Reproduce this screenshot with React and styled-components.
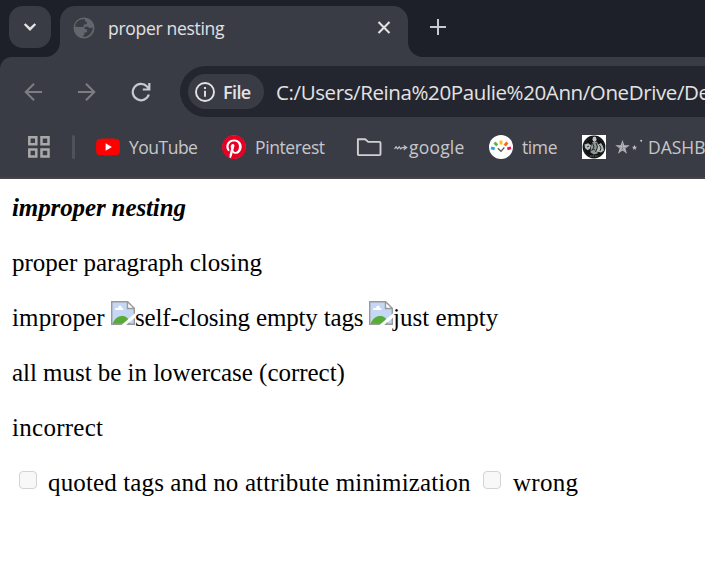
import React from "react";
import styled, { createGlobalStyle } from "styled-components";

const GlobalStyle = createGlobalStyle`
  html, body { margin: 0; padding: 0; background: #fff; overflow: hidden; }
  * { box-sizing: border-box; }
  svg { flex: none; display: block; }
`;

const surface = "#3a3c45";
const frame = "#1d2029";
const uiFont = `"Open Sans", "Noto Sans", "DejaVu Sans", sans-serif`;

const Window = styled.div`
  width: 705px;
  height: 568px;
  overflow: hidden;
  display: flex;
  flex-direction: column;
  background: #fff;
`;

const Chrome = styled.header`
  height: 179px;
  flex: none;
  background: ${surface};
  border-bottom: 2px solid #46434a;
  font-family: ${uiFont};
  white-space: nowrap;
`;

const TabStrip = styled.div`
  height: 57px;
  display: flex;
  align-items: flex-start;
  background: ${frame};
  padding: 6px 0 0 9px;
`;

const TabSearch = styled.button`
  width: 42px;
  height: 42px;
  padding: 0;
  border: 0;
  border-radius: 14px;
  background: ${surface};
  display: grid;
  place-items: center;
`;

const Tab = styled.div`
  position: relative;
  width: 348px;
  height: 51px;
  margin-left: 9px;
  padding: 0 15px 8px 13px;
  display: flex;
  align-items: center;
  border-radius: 15px 15px 0 0;
  background: ${surface};
  &::before, &::after {
    content: "";
    position: absolute;
    bottom: 0;
    width: 15px;
    height: 15px;
  }
  &::before {
    right: 100%;
    background: radial-gradient(circle at 0 0, transparent 14.5px, ${surface} 15.5px);
  }
  &::after {
    left: 100%;
    background: radial-gradient(circle at 100% 0, transparent 14.5px, ${surface} 15.5px);
  }
`;

const Label = styled.span`
  font-size: ${(p) => p.$size || 17.5}px;
  font-weight: ${(p) => p.$weight || 400};
  letter-spacing: ${(p) => p.$track ?? -0.4}px;
  color: ${(p) => p.$color || "#c7c7ca"};
  line-height: 26px;
`;

const TabTitle = styled(Label)`
  flex: 1;
  margin-left: 13px;
  padding-top: 1px;
`;

const NewTab = styled.button`
  width: 24px;
  height: 24px;
  margin: 9px 0 0 18px;
  padding: 0;
  border: 0;
  background: none;
`;

const Toolbar = styled.div`
  height: 61px;
  display: flex;
  align-items: center;
  padding: 8px 0 0 21px;
  background: radial-gradient(circle at 12px 12px, ${surface} 11.5px, ${frame} 12.5px) 0 0 / 12px 12px no-repeat;
`;

const NavButton = styled.button`
  width: 24px;
  height: 24px;
  padding: 0;
  border: 0;
  margin-right: 30px;
  background: none;
  display: grid;
  flex: none;
  color: ${(p) => (p.$active ? "#c5c9d3" : "#7d7d82")};
`;

const Omnibox = styled.div`
  width: 560px;
  height: 51px;
  margin: 0 0 0 -3px;
  flex: none;
  display: flex;
  align-items: center;
  padding-left: 8px;
  border-radius: 26px;
  background: #23262f;
`;

const FileChip = styled.div`
  width: 76px;
  height: 35px;
  flex: none;
  padding-left: 6px;
  margin-right: 12px;
  display: flex;
  align-items: center;
  gap: 7px;
  border-radius: 18px;
  background: ${surface};
`;

const Bookmarks = styled.nav`
  height: 58px;
  display: flex;
  align-items: center;
  padding-left: 27px;
`;

const Divider = styled.i`
  width: 3px;
  height: 24px;
  flex: none;
  margin: 0 21px;
  border-radius: 2px;
  background: #50525b;
`;

const Bookmark = styled.div`
  width: ${(p) => p.$width}px;
  flex: none;
  display: flex;
  align-items: center;
  gap: 9px;
`;

const SymbolLabel = styled.span`
  display: flex;
  align-items: center;
  gap: ${(p) => p.$gap}px;
  margin-left: ${(p) => p.$inset || 0}px;
`;

const Page = styled.main`
  flex: 1;
  padding: 13px 12px;
  display: flex;
  flex-direction: column;
  gap: 24px;
  font-family: "Liberation Serif", "Times New Roman", serif;
  font-size: 25px;
  color: #000;
`;

const Line = styled.p`
  height: 31px;
  margin: 0;
  line-height: 31px;
  display: flex;
  white-space: nowrap;
`;

const Run = styled.span`
  flex: none;
  width: ${(p) => (p.$width ? `${p.$width}px` : "auto")};
  letter-spacing: ${(p) => p.$track || 0}px;
`;

const Emphasis = styled(Run)`
  font-weight: 700;
  font-style: italic;
`;

const Checkbox = styled.span`
  width: 18px;
  height: 18px;
  flex: none;
  margin: ${(p) => (p.$first ? "4px 11px 0 7px" : "4px 12px 0 0")};
  border: 1.5px solid #d3d3d3;
  border-radius: 4px;
  background: #f8f8f8;
`;

const Globe = () => (
  <svg width="22" height="22" viewBox="0 0 22 22">
    <circle cx="11" cy="11" r="10.5" fill="#63666b" />
    <path d="M10 2.200C5.800 2.200 2.400 5.500 2 9.800L8 10h2.500l.3-2.500 3-.3V4.700L12 4.600V2.300Z" fill={surface} />
    <path d="M2 11.300 5 11.200c2.500 0 4 .7 4.200 3l2.800.2v2.300l-1.500 1v2.100C5.800 19.800 2.300 16 2 11.300Z" fill="#63666b" />
    <path d="M19.800 10.500c-1.500.7-3.800.8-4.800-.8h-3.200l-.2 2.300 2.500.6v2.600l-2.600.2v2l-1.200.8v1.600c5 .3 9.300-3.600 9.500-9.300Z" fill={surface} />
  </svg>
);

const Apps = () => (
  <svg width="24" height="24" viewBox="0 0 24 24" fill="none" stroke="#aaa9aa" strokeWidth="2.500">
    <path d="M2.300 2.300h7v7h-7zM14.500 2.300h7v7h-7zM2.300 14.500h7v7h-7zM14.500 14.500h7v7h-7z" />
  </svg>
);

const YouTube = () => (
  <svg width="24" height="24" viewBox="0 0 24 24">
    <path d="M3.200 3.900C8 3.300 16 3.300 20.800 3.900c1.600.2 2.500 1.200 2.800 2.700.5 3.400.5 7.400 0 10.800-.3 1.500-1.200 2.500-2.800 2.700-4.800.6-12.800.6-17.600 0C1.600 19.900.7 18.900.4 17.400c-.5-3.400-.5-7.400 0-10.800C.7 5.100 1.600 4.100 3.200 3.900Z" fill="#f00" />
    <path d="m9.600 8.200 6.300 3.800-6.300 3.800Z" fill="#fff" />
  </svg>
);

const Pinterest = () => (
  <svg width="24" height="24" viewBox="0 0 24 24">
    <circle cx="12" cy="12" r="11.500" fill="#fff" />
    <path fill="#e60023" d="M12.017 0C5.396 0 .029 5.367.029 11.987c0 5.079 3.158 9.417 7.618 11.162-.105-.949-.199-2.403.041-3.439.219-.937 1.406-5.957 1.406-5.957s-.359-.72-.359-1.781c0-1.663.967-2.911 2.168-2.911 1.024 0 1.518.769 1.518 1.688 0 1.029-.653 2.567-.992 3.992-.285 1.193.6 2.165 1.775 2.165 2.128 0 3.768-2.245 3.768-5.487 0-2.861-2.063-4.869-5.008-4.869-3.41 0-5.409 2.562-5.409 5.199 0 1.033.394 2.143.889 2.741.099.12.112.225.085.345-.09.375-.293 1.199-.334 1.363-.053.225-.172.271-.401.165-1.495-.69-2.433-2.878-2.433-4.646 0-3.776 2.748-7.252 7.920-7.252 4.158 0 7.392 2.967 7.392 6.923 0 4.135-2.607 7.462-6.233 7.462-1.214 0-2.354-.629-2.758-1.379l-.749 2.848c-.269 1.045-1.004 2.352-1.498 3.146 1.123.345 2.306.535 3.550.535 6.607 0 11.985-5.365 11.985-11.987C23.970 5.390 18.592.026 11.985.026L12.017 0z" />
  </svg>
);

const Folder = () => (
  <svg width="26" height="24" viewBox="0 0 26 24" fill="none" stroke="#d0d0d2" strokeWidth="1.900" strokeLinejoin="round">
    <path d="M1.900 4.200h7.300l3 2.700h11.300q1 0 1 1v11.200q0 1-1 1H2.900q-1 0-1-1Z" />
  </svg>
);

const Arrow = () => (
  <svg width="14" height="10" viewBox="0 0 14 10" fill="none" stroke="#c1c1c4" strokeWidth="1.200">
    <path d="m.5 6.800 1.600-2 1.500 2 1.600-2 1.500 2 1.500-1.200h4.300M9.700 3.400l3 2.200-3 2.200" />
  </svg>
);

const TimeIcon = () => (
  <svg width="24" height="24" viewBox="0 0 24 24" fill="none" strokeWidth="2.900">
    <circle cx="12" cy="12" r="12" fill="#fff" />
    <path d="m2 12.800 3.700 1" stroke="#20a7e8" />
    <path d="m5.500 7.500 2.700 3" stroke="#58b947" />
    <path d="M12 5.500v4" stroke="#ffbd16" />
    <path d="m18.400 7.500-2.700 3" stroke="#f36b21" />
    <path d="m22 12.800-3.700 1" stroke="#ed174c" />
    <path d="m8.800 13.300 3.200 3 3.300-3.800" stroke="#555" strokeWidth="1.200" />
  </svg>
);

const Dashboard = () => (
  <svg width="24" height="24" viewBox="0 0 24 24">
    <path fill="#fff" d="M0 0h24v24H0z" />
    <circle cx="12" cy="12" r="11.400" fill="#111415" />
    <circle cx="12" cy="12" r="10" fill="none" stroke="#34393a" strokeWidth=".7" strokeDasharray="1.500 1" />
    <ellipse cx="12.500" cy="4.200" rx="2" ry="2.700" fill="#c3c8c6" />
    <path fill="#8f9694" d="m10.500 7 4.500-.3 1.700 3.800-1.200 8-3.500 1-3.500-2 .5-6Z" />
    <path fill="#b4bab8" d="M2.500 9.500 6 8.200l3 2-1 3.500-2.500 1.500L3 13Zm13 .5 3.500-2 2 3.500 1 4-3 2-4-1Z" />
    <path fill="none" stroke="#191c1c" strokeWidth=".9" d="m10.500 8 1.500 4-2.500 4M14 8l1.500 4-2 5m4-7 1.500 3-1 3M5 12l2-1m4 3 2 1" />
    <path fill="none" stroke="#737b79" strokeWidth="1" d="M8 21h8" strokeDasharray="1.500 1" />
  </svg>
);

const Stars = () => (
  <svg width="30" height="24" viewBox="0 0 30 24">
    <path fill="#b9b9bd" d="m7.500 5 1.800 5.200h5.400l-4.400 3.300 1.700 5.200-4.500-3.200L3 18.700l1.700-5.200L.3 10.200h5.400Z" />
    <path d="m7.500 7.500v6m0 0-5-2m5 2 5-2m-5 2-3 4m3-4 3 4" fill="none" stroke="#72747b" strokeWidth=".5" />
    <path fill="#c0c0c3" d="m19.500 9.800.7 1.900h2l-1.600 1.200.6 2-1.700-1.200-1.700 1.200.6-2-1.600-1.200h2Z" />
    <circle cx="26.200" cy="5.800" r="1" fill="#c7c7ca" />
  </svg>
);

const BrokenImage = styled(({ className }) => (
  <svg className={className} width="24" height="24" viewBox="0 0 24 24">
    <path fill="#c4d7f5" d="M1 1h15.500L23 7.500V23H1Z" />
    <path fill="#fff" d="M4 9c-.2-2 2-2.800 3-1.600C7.500 3.500 10.800 4 10.800 7c1.500-.2 2 1.200 1.500 2Z" />
    <path fill="#57ac35" d="M1.500 23c2-5.500 5.700-8 10-8 3.500 0 6 2.800 7 5v3Z" />
    <path fill="#fff" d="M16.500 1v6.500H23Z" />
    <path fill="none" stroke="#9a9a9a" strokeWidth="1.400" d="M.7 23.300V.7h16l6.600 6.600v16ZM16.500.7v6.800h6.800" />
    <path fill="#fff" d="M10.500 24 24 12.200v4.600L15 24Z" />
  </svg>
))`
  margin-top: -1px;
`;

export default function App() {
  return (
    <Window>
      <GlobalStyle />
      <Chrome>
        <TabStrip>
          <TabSearch aria-label="Search tabs">
            <svg width="14" height="14" viewBox="0 0 14 14" fill="none" stroke="#e3e3e3" strokeWidth="2.400">
              <path d="m1.700 4 5.300 5.200L12.300 4" />
            </svg>
          </TabSearch>
          <Tab>
            <Globe />
            <TabTitle $color="#e1e1e3" $track={-0.3}>proper nesting</TabTitle>
            <svg width="18" height="18" viewBox="0 0 18 18" fill="none" stroke="#e3e3e3" strokeWidth="2.100">
              <path d="m3.500 3 11 11m0-11-11 11" />
            </svg>
          </Tab>
          <NewTab aria-label="New tab">
            <svg width="24" height="24" viewBox="0 0 24 24" fill="none" stroke="#c5c9d3" strokeWidth="2">
              <path d="M12 4v16M4 12h16" />
            </svg>
          </NewTab>
        </TabStrip>
        <Toolbar>
          <NavButton aria-label="Back">
            <svg width="24" height="24" viewBox="0 0 24 24" fill="none" stroke="currentColor" strokeWidth="2">
              <path d="M21 12H4.500m8.500-8.300L4.700 12l8.300 8.300" />
            </svg>
          </NavButton>
          <NavButton aria-label="Forward">
            <svg width="24" height="24" viewBox="0 0 24 24" fill="none" stroke="currentColor" strokeWidth="2">
              <path d="M3 12h16.500M11 3.700l8.300 8.300-8.300 8.300" />
            </svg>
          </NavButton>
          <NavButton aria-label="Reload" $active>
            <svg width="24" height="24" viewBox="0 0 24 24" fill="none" stroke="currentColor" strokeWidth="2.200">
              <path d="M19.800 14.500A8.200 8.200 0 1 1 18 6.500l2 2M20.300 3v6.500h-6.500" />
            </svg>
          </NavButton>
          <Omnibox>
            <FileChip>
              <svg width="22" height="22" viewBox="0 0 22 22" fill="none" stroke="#e3e3e3" strokeWidth="1.900">
                <circle cx="11" cy="11" r="9" />
                <path d="M11 9.800v6M11 6v2" />
              </svg>
              <Label $size={18} $weight={600} $color="#e3e3e3" $track={-0.6}>File</Label>
            </FileChip>
            <Label $size={20.5} $color="#e3e3e3" $track={-0.39}>C:/Users/Reina%20Paulie%20Ann/OneDrive/De</Label>
          </Omnibox>
        </Toolbar>
        <Bookmarks>
          <Apps />
          <Divider />
          <Bookmark $width={126}><YouTube /><Label $track={-0.5}>YouTube</Label></Bookmark>
          <Bookmark $width={134}><Pinterest /><Label>Pinterest</Label></Bookmark>
          <Bookmark $width={133}>
            <Folder />
            <SymbolLabel $gap={1} $inset={3}><Arrow /><Label $track={0.2}>google</Label></SymbolLabel>
          </Bookmark>
          <Bookmark $width={93}><TimeIcon /><Label>time</Label></Bookmark>
          <Bookmark $width={200}>
            <Dashboard />
            <SymbolLabel $gap={3}><Stars /><Label $track={0}>DASHBO</Label></SymbolLabel>
          </Bookmark>
        </Bookmarks>
      </Chrome>
      <Page>
        <Line><Emphasis $track={-0.12}>improper nesting</Emphasis></Line>
        <Line><Run>proper paragraph closing</Run></Line>
        <Line>
          <Run $width={99} $track={0.15}>improper</Run>
          <BrokenImage />
          <Run $width={234} $track={-0.15}>self-closing empty tags</Run>
          <BrokenImage />
          <Run $track={0.05}>just empty</Run>
        </Line>
        <Line><Run $track={-0.03}>all must be in lowercase (correct)</Run></Line>
        <Line><Run $track={0.28}>incorrect</Run></Line>
        <Line>
          <Checkbox $first role="checkbox" aria-disabled="true" />
          <Run $width={435} $track={0.13}>quoted tags and no attribute minimization</Run>
          <Checkbox role="checkbox" aria-disabled="true" />
          <Run $track={0.3}>wrong</Run>
        </Line>
      </Page>
    </Window>
  );
}
